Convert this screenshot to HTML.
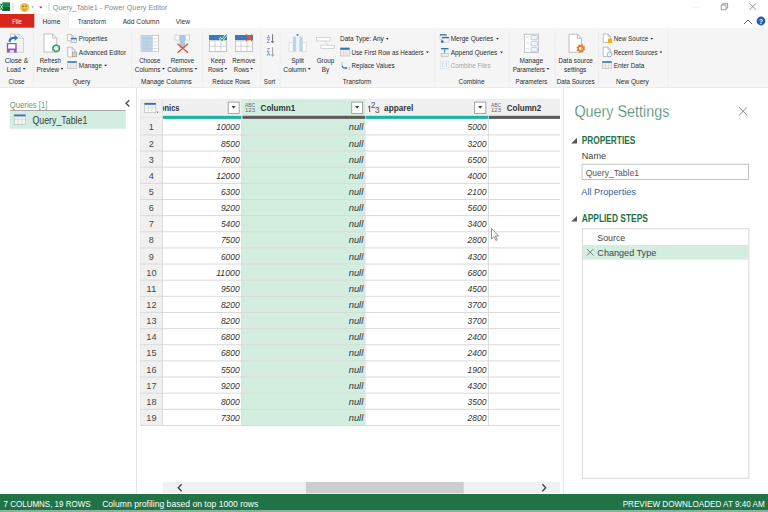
<!DOCTYPE html>
<html><head><meta charset="utf-8"><title>Power Query Editor</title>
<style>html,body{margin:0;padding:0;width:768px;height:512px;overflow:hidden;background:#fff;font-family:"Liberation Sans",sans-serif;} svg{display:block}</style>
</head><body><svg width="768" height="512" viewBox="0 0 768 512" font-family='"Liberation Sans", sans-serif'><rect x="0" y="0" width="768" height="14" fill="#ffffff" /><rect x="2.4" y="2.3" width="7.6" height="8.6" fill="#1e8a4a" /><rect x="2.4" y="7" width="7.6" height="3.9" fill="#11693a" /><rect x="0" y="3.8" width="3.6" height="5.8" fill="#157a40" /><path d="M0.3,4.6 L2.8,8.8 M2.8,4.6 L0.3,8.8" fill="none" stroke="#e8f4ec" stroke-width="0.9" /><line x1="13" y1="3" x2="13" y2="11" stroke="#c9d3dc" stroke-width="1" /><circle cx="24.6" cy="7.5" r="4.6" fill="#f4c542"/><path d="M21.8,5.4 L23.6,5.2 M25.6,5.2 L27.4,5.4" fill="none" stroke="#e07a3a" stroke-width="0.9" /><circle cx="23" cy="6.6" r="0.75" fill="#3a8a5a"/><circle cx="26" cy="6.6" r="0.75" fill="#3a8a5a"/><path d="M22.2,8.8 Q24.6,11.2 27,8.6" fill="none" stroke="#d7843a" stroke-width="0.8" /><circle cx="24" cy="9.9" r="0.8" fill="#e0703a"/><path d="M31.699999999999996,6.5 L33.9,6.5 L32.8,7.9 Z" fill="#6b8f7a"/><path d="M39.099999999999994,6.4 L42.5,6.4 L40.8,8.6 Z" fill="#555"/><line x1="49" y1="3" x2="49" y2="11" stroke="#c9d3dc" stroke-width="1" /><text x="52.75" y="9.9" font-size="7.5" fill="#8a8a8a" font-weight="400" text-anchor="start" font-style="normal" textLength="114.6" lengthAdjust="spacingAndGlyphs" >Query_Table1 - Power Query Editor</text><line x1="692" y1="7" x2="700" y2="7" stroke="#e6e6e6" stroke-width="0.8" /><rect x="721.2" y="5" width="4.8" height="4.8" fill="none" stroke="#888" stroke-width="0.8"/><path d="M722.8,5 V3.6 H727.6 V8.2 H726" fill="none" stroke="#888" stroke-width="0.8" /><path d="M749.5,3.3 L756,9.8 M756,3.3 L749.5,9.8" fill="none" stroke="#777" stroke-width="0.8" /><rect x="0" y="14" width="768" height="14" fill="#ffffff" /><rect x="0" y="14" width="34.7" height="13.7" fill="#d7261c" /><rect x="34.7" y="13.2" width="33.8" height="15" fill="#f5f5f5" /><line x1="34.7" y1="13.2" x2="34.7" y2="28" stroke="#e4e4e4" stroke-width="0.6" /><line x1="68.5" y1="13.2" x2="68.5" y2="28" stroke="#e4e4e4" stroke-width="0.6" /><text x="12.15" y="23.6" font-size="6.8" fill="#ffffff" font-weight="400" text-anchor="start" font-style="normal" textLength="9.8" lengthAdjust="spacingAndGlyphs" >File</text><text x="42.55" y="24.1" font-size="6.9" fill="#333" font-weight="400" text-anchor="start" font-style="normal" textLength="17.8" lengthAdjust="spacingAndGlyphs" >Home</text><text x="77.65" y="24.1" font-size="6.9" fill="#333" font-weight="400" text-anchor="start" font-style="normal" textLength="28.5" lengthAdjust="spacingAndGlyphs" >Transform</text><text x="122.65" y="24.1" font-size="6.9" fill="#333" font-weight="400" text-anchor="start" font-style="normal" textLength="36.7" lengthAdjust="spacingAndGlyphs" >Add Column</text><text x="175.65" y="24.1" font-size="6.9" fill="#333" font-weight="400" text-anchor="start" font-style="normal" textLength="14.3" lengthAdjust="spacingAndGlyphs" >View</text><path d="M744,24 L748,20 L752,24" fill="none" stroke="#555" stroke-width="0.9" /><circle cx="761" cy="21" r="4.4" fill="#1f5fb5"/><text x="761" y="23.6" font-size="6.4" fill="#ffffff" font-weight="700" text-anchor="middle" font-style="normal" >?</text><rect x="0" y="28" width="768" height="59.5" fill="#f5f5f5" /><line x1="0" y1="87.5" x2="768" y2="87.5" stroke="#ebebeb" stroke-width="1" /><line x1="33.5" y1="30" x2="33.5" y2="86" stroke="#d6d6d6" stroke-width="0.5" stroke-dasharray="1,1.2"/><line x1="131.7" y1="30" x2="131.7" y2="86" stroke="#d6d6d6" stroke-width="0.5" stroke-dasharray="1,1.2"/><line x1="202.5" y1="30" x2="202.5" y2="86" stroke="#d6d6d6" stroke-width="0.5" stroke-dasharray="1,1.2"/><line x1="260.6" y1="30" x2="260.6" y2="86" stroke="#d6d6d6" stroke-width="0.5" stroke-dasharray="1,1.2"/><line x1="280.2" y1="30" x2="280.2" y2="86" stroke="#d6d6d6" stroke-width="0.5" stroke-dasharray="1,1.2"/><line x1="435" y1="30" x2="435" y2="86" stroke="#d6d6d6" stroke-width="0.5" stroke-dasharray="1,1.2"/><line x1="509.3" y1="30" x2="509.3" y2="86" stroke="#d6d6d6" stroke-width="0.5" stroke-dasharray="1,1.2"/><line x1="555.1" y1="30" x2="555.1" y2="86" stroke="#d6d6d6" stroke-width="0.5" stroke-dasharray="1,1.2"/><line x1="598.5" y1="30" x2="598.5" y2="86" stroke="#d6d6d6" stroke-width="0.5" stroke-dasharray="1,1.2"/><line x1="668.2" y1="30" x2="668.2" y2="86" stroke="#d6d6d6" stroke-width="0.5" stroke-dasharray="1,1.2"/><path d="M10.4,34.2 H19.2 L23.4,38.400000000000006 V52.2 H10.4 Z" fill="#f8f8f8" stroke="#c4c4c4" stroke-width="0.8" /><path d="M19.2,34.2 V38.400000000000006 H23.4" fill="none" stroke="#c4c4c4" stroke-width="0.8" /><line x1="17.5" y1="41" x2="21.8" y2="41" stroke="#e2e2e2" stroke-width="0.6" /><line x1="17.5" y1="43.5" x2="21.8" y2="43.5" stroke="#e2e2e2" stroke-width="0.6" /><line x1="17.5" y1="46" x2="21.8" y2="46" stroke="#e2e2e2" stroke-width="0.6" /><line x1="17.5" y1="48.5" x2="21.8" y2="48.5" stroke="#e2e2e2" stroke-width="0.6" /><path d="M9.6,41.8 C9.6,38.6 11.6,37.6 15,37.8" fill="none" stroke="#2f73b8" stroke-width="2.3" /><path d="M14.6,34.8 L18.2,37.9 L14.6,41 Z" fill="#2f73b8" stroke="none" stroke-width="1" /><rect x="6.8" y="43" width="9.9" height="9.6" fill="#8e5bb5" /><rect x="8.2" y="44.2" width="7.1" height="4.3" fill="#ffffff" /><rect x="9.8" y="50.2" width="4.2" height="2.4" fill="#f0e8f6" /><text x="4.65" y="62.5" font-size="7.2" fill="#2b2b2b" font-weight="400" text-anchor="start" font-style="normal" textLength="23.5" lengthAdjust="spacingAndGlyphs" >Close &amp;</text><text x="6.75" y="71.6" font-size="7.2" fill="#2b2b2b" font-weight="400" text-anchor="start" font-style="normal" textLength="14.1" lengthAdjust="spacingAndGlyphs" >Load</text><path d="M22.8,68.0 L25.599999999999998,68.0 L24.2,69.80000000000001 Z" fill="#2b2b2b"/><text x="8.55" y="83.7" font-size="7.2" fill="#2b2b2b" font-weight="400" text-anchor="start" font-style="normal" textLength="16.0" lengthAdjust="spacingAndGlyphs" >Close</text><path d="M44,34 H52.55 L56.75,38.2 V52 H44 Z" fill="#ffffff" stroke="#b0b0b0" stroke-width="0.8" /><path d="M52.55,34 V38.2 H56.75" fill="none" stroke="#b0b0b0" stroke-width="0.8" /><circle cx="56" cy="48.5" r="4.3" fill="#f5f5f5"/><path d="M53.05,48.96 A3.2,3.2 0 0 1 58.65,46.34" fill="none" stroke="#35a070" stroke-width="1.6" /><path d="M59.35,47.84 A3.2,3.2 0 0 1 53.75,50.46" fill="none" stroke="#35a070" stroke-width="1.6" /><path d="M60.04,47.99 L60.03,45.18 L57.27,47.50 Z" fill="#35a070" stroke="none" stroke-width="1" /><path d="M52.36,48.81 L52.37,51.62 L55.13,49.30 Z" fill="#35a070" stroke="none" stroke-width="1" /><text x="39.75" y="62.5" font-size="7.2" fill="#2b2b2b" font-weight="400" text-anchor="start" font-style="normal" textLength="21.2" lengthAdjust="spacingAndGlyphs" >Refresh</text><text x="36.55" y="71.6" font-size="7.2" fill="#2b2b2b" font-weight="400" text-anchor="start" font-style="normal" textLength="22.6" lengthAdjust="spacingAndGlyphs" >Preview</text><path d="M60.6,68.0 L63.4,68.0 L62,69.80000000000001 Z" fill="#2b2b2b"/><text x="72.65" y="83.7" font-size="7.2" fill="#2b2b2b" font-weight="400" text-anchor="start" font-style="normal" textLength="17.7" lengthAdjust="spacingAndGlyphs" >Query</text><path d="M67.3,34.2 H71.3 L73.3,36.2 V40.800000000000004 H67.3 Z" fill="#f8f8f8" stroke="#b8b8b8" stroke-width="0.8" /><path d="M71.3,34.2 V36.2 H73.3" fill="none" stroke="#b8b8b8" stroke-width="0.8" /><rect x="71" y="38" width="5.6" height="4.5" fill="#e8e8e8" stroke="#a0a0a0" stroke-width="0.6"/><rect x="71" y="38" width="5.6" height="1.3" fill="#2f73b8" /><text x="78.85" y="41.2" font-size="7.2" fill="#2b2b2b" font-weight="400" text-anchor="start" font-style="normal" textLength="28.5" lengthAdjust="spacingAndGlyphs" >Properties</text><path d="M67.6,47.2 H72.1 L74.6,49.7 V56.800000000000004 H67.6 Z" fill="#f8f8f8" stroke="#b8b8b8" stroke-width="0.8" /><path d="M72.1,47.2 V49.7 H74.6" fill="none" stroke="#b8b8b8" stroke-width="0.8" /><rect x="72.2" y="52" width="4.6" height="4.8" fill="#cfcfcf" stroke="#888" stroke-width="0.5"/><text x="78.85" y="54.7" font-size="7.2" fill="#2b2b2b" font-weight="400" text-anchor="start" font-style="normal" textLength="47.2" lengthAdjust="spacingAndGlyphs" >Advanced Editor</text><rect x="67.6" y="61.3" width="9" height="7.4" fill="#eeeeee" stroke="#b8b8b8" stroke-width="0.6"/><rect x="67.6" y="61.3" width="9" height="1.5" fill="#2f73b8" /><line x1="70.6" y1="62.8" x2="70.6" y2="68.7" stroke="#c8c8c8" stroke-width="0.5" /><line x1="73.6" y1="62.8" x2="73.6" y2="68.7" stroke="#c8c8c8" stroke-width="0.5" /><text x="78.85" y="68.3" font-size="7.2" fill="#2b2b2b" font-weight="400" text-anchor="start" font-style="normal" textLength="23.1" lengthAdjust="spacingAndGlyphs" >Manage</text><path d="M104.19999999999999,64.69999999999999 L107.0,64.69999999999999 L105.6,66.5 Z" fill="#2b2b2b"/><rect x="141" y="35.3" width="17.7" height="16.3" fill="#ffffff" stroke="#b9b9b9" stroke-width="0.7"/><rect x="141.3" y="35.6" width="11.5" height="15.7" fill="#bcd3e8" /><line x1="152.8" y1="38.6" x2="158.5" y2="38.6" stroke="#c8c8c8" stroke-width="0.6" /><line x1="141.3" y1="38.6" x2="152.8" y2="38.6" stroke="#adc4da" stroke-width="0.4" /><line x1="152.8" y1="41.9" x2="158.5" y2="41.9" stroke="#c8c8c8" stroke-width="0.6" /><line x1="141.3" y1="41.9" x2="152.8" y2="41.9" stroke="#adc4da" stroke-width="0.4" /><line x1="152.8" y1="45.2" x2="158.5" y2="45.2" stroke="#c8c8c8" stroke-width="0.6" /><line x1="141.3" y1="45.2" x2="152.8" y2="45.2" stroke="#adc4da" stroke-width="0.4" /><line x1="152.8" y1="48.5" x2="158.5" y2="48.5" stroke="#c8c8c8" stroke-width="0.6" /><line x1="141.3" y1="48.5" x2="152.8" y2="48.5" stroke="#adc4da" stroke-width="0.4" /><line x1="147" y1="35.6" x2="147" y2="51.3" stroke="#adc4da" stroke-width="0.4" /><text x="139.15" y="62.5" font-size="7.2" fill="#2b2b2b" font-weight="400" text-anchor="start" font-style="normal" textLength="21.2" lengthAdjust="spacingAndGlyphs" >Choose</text><text x="134.75" y="71.6" font-size="7.2" fill="#2b2b2b" font-weight="400" text-anchor="start" font-style="normal" textLength="25.8" lengthAdjust="spacingAndGlyphs" >Columns</text><path d="M162.1,68.0 L164.9,68.0 L163.5,69.80000000000001 Z" fill="#2b2b2b"/><rect x="175" y="35" width="4.2" height="5" fill="#ffffff" stroke="#c0c0c0" stroke-width="0.6"/><rect x="185.5" y="35" width="4.2" height="5" fill="#ffffff" stroke="#c0c0c0" stroke-width="0.6"/><rect x="179.6" y="35" width="5.6" height="13" fill="#a9c7e4" /><path d="M177.5,43.8 L188,52.8 M188,43.8 L177.5,52.8" fill="none" stroke="#e0512b" stroke-width="1.3" /><text x="170.65" y="62.5" font-size="7.2" fill="#2b2b2b" font-weight="400" text-anchor="start" font-style="normal" textLength="23.5" lengthAdjust="spacingAndGlyphs" >Remove</text><text x="167.25" y="71.6" font-size="7.2" fill="#2b2b2b" font-weight="400" text-anchor="start" font-style="normal" textLength="25.8" lengthAdjust="spacingAndGlyphs" >Columns</text><path d="M194.5,68.0 L197.3,68.0 L195.9,69.80000000000001 Z" fill="#2b2b2b"/><text x="141.05" y="83.7" font-size="7.2" fill="#2b2b2b" font-weight="400" text-anchor="start" font-style="normal" textLength="50.7" lengthAdjust="spacingAndGlyphs" >Manage Columns</text><rect x="209.4" y="40.8" width="17.2" height="10.8" fill="#ffffff" stroke="#bdbdbd" stroke-width="0.9"/><rect x="209" y="35" width="18" height="5" fill="#3a78c0" /><line x1="209" y1="46.3" x2="227" y2="46.3" stroke="#c8c8c8" stroke-width="0.8" /><line x1="215" y1="40.8" x2="215" y2="51.6" stroke="#c8c8c8" stroke-width="0.8" /><line x1="221" y1="40.8" x2="221" y2="51.6" stroke="#c8c8c8" stroke-width="0.8" /><path d="M219.5,37.6 L222,40.4 L226.6,34.6" fill="none" stroke="#ffffff" stroke-width="2.4" /><path d="M219.5,37.6 L222,40.4 L226.6,34.6" fill="none" stroke="#3aa06a" stroke-width="1.3" /><text x="210.65" y="62.5" font-size="7.2" fill="#2b2b2b" font-weight="400" text-anchor="start" font-style="normal" textLength="14.5" lengthAdjust="spacingAndGlyphs" >Keep</text><text x="207.95" y="71.6" font-size="7.2" fill="#2b2b2b" font-weight="400" text-anchor="start" font-style="normal" textLength="15.3" lengthAdjust="spacingAndGlyphs" >Rows</text><path d="M224.5,68.0 L227.3,68.0 L225.9,69.80000000000001 Z" fill="#2b2b2b"/><rect x="235.4" y="40.8" width="17.2" height="10.8" fill="#ffffff" stroke="#bdbdbd" stroke-width="0.9"/><rect x="235" y="35" width="18" height="5" fill="#3a78c0" /><line x1="235" y1="46.3" x2="253" y2="46.3" stroke="#c8c8c8" stroke-width="0.8" /><line x1="241" y1="40.8" x2="241" y2="51.6" stroke="#c8c8c8" stroke-width="0.8" /><line x1="247" y1="40.8" x2="247" y2="51.6" stroke="#c8c8c8" stroke-width="0.8" /><path d="M246,34.5 L252.2,40.8 M252.2,34.5 L246,40.8" fill="none" stroke="#e8552a" stroke-width="1.3" /><text x="232.35" y="62.5" font-size="7.2" fill="#2b2b2b" font-weight="400" text-anchor="start" font-style="normal" textLength="23.0" lengthAdjust="spacingAndGlyphs" >Remove</text><text x="233.85" y="71.6" font-size="7.2" fill="#2b2b2b" font-weight="400" text-anchor="start" font-style="normal" textLength="15.1" lengthAdjust="spacingAndGlyphs" >Rows</text><path d="M250.29999999999998,68.0 L253.1,68.0 L251.7,69.80000000000001 Z" fill="#2b2b2b"/><text x="212.35" y="83.7" font-size="7.2" fill="#2b2b2b" font-weight="400" text-anchor="start" font-style="normal" textLength="37.7" lengthAdjust="spacingAndGlyphs" >Reduce Rows</text><text x="268.3" y="38.6" font-size="5" fill="#3b7dc4" font-weight="400" text-anchor="middle" font-style="normal" >A</text><text x="268.3" y="43" font-size="5" fill="#8e5bb5" font-weight="400" text-anchor="middle" font-style="normal" >Z</text><line x1="272.6" y1="34.2" x2="272.6" y2="42.6" stroke="#666" stroke-width="0.9" /><path d="M271.1,41 L272.6,43 L274.1,41" fill="none" stroke="#666" stroke-width="0.8" /><text x="268.3" y="51.6" font-size="5" fill="#8e5bb5" font-weight="400" text-anchor="middle" font-style="normal" >Z</text><text x="268.3" y="56.3" font-size="5" fill="#3b7dc4" font-weight="400" text-anchor="middle" font-style="normal" >A</text><line x1="272.6" y1="47.2" x2="272.6" y2="56" stroke="#999" stroke-width="0.9" /><path d="M271.1,54.4 L272.6,56.4 L274.1,54.4" fill="none" stroke="#999" stroke-width="0.8" /><text x="263.85" y="83.7" font-size="7.2" fill="#2b2b2b" font-weight="400" text-anchor="start" font-style="normal" textLength="11.5" lengthAdjust="spacingAndGlyphs" >Sort</text><path d="M289,51.6 V42.6 H293 V51.6 Z" fill="#ffffff" stroke="#d4d4d4" stroke-width="0.7" /><path d="M306.3,51.6 V42.6 H302.3 V51.6 Z" fill="#ffffff" stroke="#d4d4d4" stroke-width="0.7" /><rect x="293" y="36.6" width="3.2" height="15" fill="#bcd4ea" /><rect x="299.3" y="36.6" width="3.2" height="15" fill="#bcd4ea" /><path d="M296.0,34.3 L299.20000000000005,34.3 L297.6,36.3 Z" fill="#3a78c0"/><text x="291.15" y="62.5" font-size="7.2" fill="#2b2b2b" font-weight="400" text-anchor="start" font-style="normal" textLength="12.8" lengthAdjust="spacingAndGlyphs" >Split</text><text x="283.35" y="71.6" font-size="7.2" fill="#2b2b2b" font-weight="400" text-anchor="start" font-style="normal" textLength="22.9" lengthAdjust="spacingAndGlyphs" >Column</text><path d="M307.90000000000003,68.0 L310.7,68.0 L309.3,69.80000000000001 Z" fill="#2b2b2b"/><rect x="316.5" y="37.6" width="13.5" height="3.4" fill="#ffffff" stroke="#c6c6c6" stroke-width="0.7"/><rect x="321" y="45.2" width="13.3" height="3.4" fill="#ffffff" stroke="#c6c6c6" stroke-width="0.7"/><line x1="325" y1="41" x2="328" y2="45.2" stroke="#c6c6c6" stroke-width="0.6" /><text x="316.65" y="62.5" font-size="7.2" fill="#2b2b2b" font-weight="400" text-anchor="start" font-style="normal" textLength="17.6" lengthAdjust="spacingAndGlyphs" >Group</text><text x="321.65" y="71.6" font-size="7.2" fill="#2b2b2b" font-weight="400" text-anchor="start" font-style="normal" textLength="7.5" lengthAdjust="spacingAndGlyphs" >By</text><text x="340.05" y="41.2" font-size="7.2" fill="#2b2b2b" font-weight="400" text-anchor="start" font-style="normal" textLength="43.8" lengthAdjust="spacingAndGlyphs" >Data Type: Any</text><path d="M385.90000000000003,37.9 L388.7,37.9 L387.3,39.699999999999996 Z" fill="#2b2b2b"/><rect x="340.3" y="47.8" width="9.2" height="8.2" fill="#eeeeee" stroke="#b8b8b8" stroke-width="0.6"/><rect x="340.3" y="47.8" width="9.2" height="2" fill="#2f73b8" /><line x1="343.3" y1="49.8" x2="343.3" y2="56" stroke="#c8c8c8" stroke-width="0.5" /><line x1="346.3" y1="49.8" x2="346.3" y2="56" stroke="#c8c8c8" stroke-width="0.5" /><text x="351.55" y="54.7" font-size="7.2" fill="#2b2b2b" font-weight="400" text-anchor="start" font-style="normal" textLength="72.1" lengthAdjust="spacingAndGlyphs" >Use First Row as Headers</text><path d="M426.1,51.4 L428.9,51.4 L427.5,53.199999999999996 Z" fill="#2b2b2b"/><text x="342" y="65" font-size="3.6" fill="#777" font-weight="400" text-anchor="middle" font-style="normal" >1</text><path d="M342,65.6 Q342.5,68.5 346.5,68" fill="none" stroke="#2f73b8" stroke-width="1.1" /><path d="M345.6,66.6 L347.6,68 L345.6,69.4 Z" fill="#2f73b8" stroke="none" stroke-width="1" /><text x="349.2" y="70.4" font-size="3.8" fill="#777" font-weight="400" text-anchor="middle" font-style="normal" >2</text><text x="351.55" y="68.3" font-size="7.2" fill="#2b2b2b" font-weight="400" text-anchor="start" font-style="normal" textLength="43.0" lengthAdjust="spacingAndGlyphs" >Replace Values</text><text x="342.65" y="83.7" font-size="7.2" fill="#2b2b2b" font-weight="400" text-anchor="start" font-style="normal" textLength="28.7" lengthAdjust="spacingAndGlyphs" >Transform</text><rect x="440" y="34.2" width="6.5" height="5.5" fill="#f2f2f2" stroke="#b8b8b8" stroke-width="0.5"/><rect x="440" y="34.2" width="6.5" height="1.3" fill="#2f73b8" /><rect x="442" y="37" width="7" height="5.2" fill="#f2f2f2" stroke="#b8b8b8" stroke-width="0.5"/><rect x="442" y="37" width="7" height="1.3" fill="#2f73b8" /><circle cx="442.2" cy="41.6" r="1.4" fill="#2f73b8"/><text x="450.65" y="41.2" font-size="7.2" fill="#2b2b2b" font-weight="400" text-anchor="start" font-style="normal" textLength="42.7" lengthAdjust="spacingAndGlyphs" >Merge Queries</text><path d="M496.1,37.9 L498.9,37.9 L497.5,39.699999999999996 Z" fill="#2b2b2b"/><rect x="441" y="48" width="7.5" height="1.4" fill="#2f73b8" /><line x1="444.7" y1="49.4" x2="444.7" y2="53.5" stroke="#2f73b8" stroke-width="0.9" /><rect x="441" y="53.5" width="7.5" height="3.1" fill="#e8e8e8" stroke="#b0b0b0" stroke-width="0.5"/><text x="450.65" y="54.7" font-size="7.2" fill="#2b2b2b" font-weight="400" text-anchor="start" font-style="normal" textLength="46.7" lengthAdjust="spacingAndGlyphs" >Append Queries</text><path d="M500.1,51.4 L502.9,51.4 L501.5,53.199999999999996 Z" fill="#2b2b2b"/><rect x="440.3" y="61.3" width="8.6" height="7.4" fill="#f4f8fb" stroke="#d0d8e0" stroke-width="0.5"/><line x1="442.8" y1="62.5" x2="442.8" y2="67" stroke="#9dbbd8" stroke-width="0.7" /><line x1="446.3" y1="62.5" x2="446.3" y2="67" stroke="#9dbbd8" stroke-width="0.7" /><text x="450.65" y="68.3" font-size="7.2" fill="#a8a8a8" font-weight="400" text-anchor="start" font-style="normal" textLength="40.1" lengthAdjust="spacingAndGlyphs" >Combine Files</text><text x="458.45" y="83.7" font-size="7.2" fill="#2b2b2b" font-weight="400" text-anchor="start" font-style="normal" textLength="26.1" lengthAdjust="spacingAndGlyphs" >Combine</text><rect x="524.5" y="34.2" width="14" height="18.2" fill="#ffffff" stroke="#b0b0b0" stroke-width="0.7"/><rect x="531" y="35.4" width="6.4" height="4.4" fill="#eef4fa" stroke="#8fb4dc" stroke-width="0.6" rx="0.8"/><line x1="526" y1="36.9" x2="529.5" y2="36.9" stroke="#c0c0c0" stroke-width="0.5" /><rect x="531" y="41.4" width="6.4" height="4.4" fill="#eef4fa" stroke="#8fb4dc" stroke-width="0.6" rx="0.8"/><line x1="526" y1="42.9" x2="529.5" y2="42.9" stroke="#c0c0c0" stroke-width="0.5" /><rect x="531" y="47.4" width="6.4" height="4.4" fill="#eef4fa" stroke="#8fb4dc" stroke-width="0.6" rx="0.8"/><line x1="526" y1="48.9" x2="529.5" y2="48.9" stroke="#c0c0c0" stroke-width="0.5" /><text x="519.55" y="62.5" font-size="7.2" fill="#2b2b2b" font-weight="400" text-anchor="start" font-style="normal" textLength="23.5" lengthAdjust="spacingAndGlyphs" >Manage</text><text x="512.65" y="71.6" font-size="7.2" fill="#2b2b2b" font-weight="400" text-anchor="start" font-style="normal" textLength="32.3" lengthAdjust="spacingAndGlyphs" >Parameters</text><path d="M546.6,68.0 L549.4,68.0 L548,69.80000000000001 Z" fill="#2b2b2b"/><text x="515.55" y="83.7" font-size="7.2" fill="#2b2b2b" font-weight="400" text-anchor="start" font-style="normal" textLength="31.8" lengthAdjust="spacingAndGlyphs" >Parameters</text><path d="M569,34.2 H577.5 L581.5,38.2 V52.2 H569 Z" fill="#ffffff" stroke="#b0b0b0" stroke-width="0.8" /><path d="M577.5,34.2 V38.2 H581.5" fill="none" stroke="#b0b0b0" stroke-width="0.8" /><circle cx="580.8" cy="48.5" r="3.2" fill="none" stroke="#e8822a" stroke-width="2.4" stroke-dasharray="1.4,1.1"/><circle cx="580.8" cy="48.5" r="2.6" fill="none" stroke="#e8822a" stroke-width="1.6"/><text x="558.45" y="62.5" font-size="7.2" fill="#2b2b2b" font-weight="400" text-anchor="start" font-style="normal" textLength="34.5" lengthAdjust="spacingAndGlyphs" >Data source</text><text x="564.05" y="71.6" font-size="7.2" fill="#2b2b2b" font-weight="400" text-anchor="start" font-style="normal" textLength="22.3" lengthAdjust="spacingAndGlyphs" >settings</text><text x="556.65" y="83.7" font-size="7.2" fill="#2b2b2b" font-weight="400" text-anchor="start" font-style="normal" textLength="38.1" lengthAdjust="spacingAndGlyphs" >Data Sources</text><path d="M603.2,34 H608.0 L610.2,36.2 V42.5 H603.2 Z" fill="#ffffff" stroke="#b0b0b0" stroke-width="0.8" /><path d="M608.0,34 V36.2 H610.2" fill="none" stroke="#b0b0b0" stroke-width="0.8" /><rect x="608" y="38.5" width="4" height="4.5" fill="#f0b400" /><text x="613.65" y="41.2" font-size="7.2" fill="#2b2b2b" font-weight="400" text-anchor="start" font-style="normal" textLength="34.6" lengthAdjust="spacingAndGlyphs" >New Source</text><path d="M650.4,37.9 L653.1999999999999,37.9 L651.8,39.699999999999996 Z" fill="#2b2b2b"/><path d="M603.2,47.2 H608.0 L610.2,49.400000000000006 V56.6 H603.2 Z" fill="#ffffff" stroke="#b0b0b0" stroke-width="0.8" /><path d="M608.0,47.2 V49.400000000000006 H610.2" fill="none" stroke="#b0b0b0" stroke-width="0.8" /><circle cx="609.6" cy="54.4" r="2.4" fill="#ffffff" stroke="#5d9ad6" stroke-width="0.7"/><text x="613.65" y="54.7" font-size="7.2" fill="#2b2b2b" font-weight="400" text-anchor="start" font-style="normal" textLength="43.9" lengthAdjust="spacingAndGlyphs" >Recent Sources</text><path d="M659.5,51.4 L662.3,51.4 L660.9,53.199999999999996 Z" fill="#2b2b2b"/><rect x="602.4" y="61.3" width="9.3" height="7.4" fill="#eeeeee" stroke="#b8b8b8" stroke-width="0.6"/><rect x="602.4" y="61.3" width="9.3" height="1.5" fill="#2f73b8" /><line x1="605.5" y1="62.8" x2="605.5" y2="68.7" stroke="#c8c8c8" stroke-width="0.5" /><line x1="608.6" y1="62.8" x2="608.6" y2="68.7" stroke="#c8c8c8" stroke-width="0.5" /><text x="613.65" y="68.3" font-size="7.2" fill="#2b2b2b" font-weight="400" text-anchor="start" font-style="normal" textLength="30.6" lengthAdjust="spacingAndGlyphs" >Enter Data</text><text x="616.05" y="83.7" font-size="7.2" fill="#2b2b2b" font-weight="400" text-anchor="start" font-style="normal" textLength="32.7" lengthAdjust="spacingAndGlyphs" >New Query</text><rect x="0" y="88" width="768" height="406" fill="#ffffff" /><line x1="136.5" y1="88" x2="136.5" y2="494" stroke="#e3e3e3" stroke-width="1" /><line x1="563.5" y1="88" x2="563.5" y2="494" stroke="#e3e3e3" stroke-width="1" /><text x="9.65" y="108" font-size="9.0" fill="#62a084" font-weight="400" text-anchor="start" font-style="normal" textLength="37.7" lengthAdjust="spacingAndGlyphs" >Queries [1]</text><rect x="10" y="110.6" width="115.8" height="18.2" fill="#d3ede0" /><line x1="10" y1="110.5" x2="125.8" y2="110.5" stroke="#a6a6a6" stroke-width="1" /><rect x="14.2" y="114.6" width="11.3" height="9.7" fill="#f4f4f4" stroke="#b9b9b9" stroke-width="0.6"/><rect x="14.2" y="114.6" width="11.3" height="1.8" fill="#2f73b8" /><line x1="14.2" y1="119.5" x2="25.5" y2="119.5" stroke="#cccccc" stroke-width="0.5" /><line x1="18" y1="116.4" x2="18" y2="124.3" stroke="#cccccc" stroke-width="0.5" /><line x1="21.7" y1="116.4" x2="21.7" y2="124.3" stroke="#cccccc" stroke-width="0.5" /><text x="32.45" y="124.2" font-size="10.2" fill="#3a3a3a" font-weight="400" text-anchor="start" font-style="normal" textLength="54.9" lengthAdjust="spacingAndGlyphs" >Query_Table1</text><path d="M129.4,100.2 L126,103.3 L129.4,106.4" fill="none" stroke="#444" stroke-width="1.3" /><rect x="140" y="99.3" width="420" height="16.5" fill="#f0f0f0" /><rect x="140" y="115.8" width="22.5" height="3.2" fill="#f0f0f0" /><line x1="140" y1="117.3" x2="162.5" y2="117.3" stroke="#e2e2e2" stroke-width="0.8" /><rect x="241.5" y="99.3" width="123.5" height="16.5" fill="#d3eedf" /><rect x="162.5" y="115.8" width="79" height="3.1" fill="#1ab3a2" /><rect x="242.5" y="115.8" width="122.5" height="3.1" fill="#5c5c5c" /><rect x="365.5" y="115.8" width="123" height="3.1" fill="#1ab3a2" /><rect x="489" y="115.8" width="71" height="3.1" fill="#5c5c5c" /><line x1="140" y1="99.3" x2="560" y2="99.3" stroke="#e2e2e2" stroke-width="0.6" /><rect x="140" y="119" width="22.5" height="306.66" fill="#f0f0f0" /><rect x="241.5" y="119" width="123.5" height="306.66" fill="#d3eedf" /><line x1="162.5" y1="119" x2="162.5" y2="425.66" stroke="#dedede" stroke-width="1" /><line x1="241.5" y1="119" x2="241.5" y2="425.66" stroke="#dedede" stroke-width="1" /><line x1="365" y1="119" x2="365" y2="425.66" stroke="#dedede" stroke-width="1" /><line x1="488.5" y1="119" x2="488.5" y2="425.66" stroke="#dedede" stroke-width="1" /><line x1="162.5" y1="99.3" x2="162.5" y2="119" stroke="#e0e0e0" stroke-width="0.8" /><line x1="140" y1="134.94" x2="560" y2="134.94" stroke="#dadada" stroke-width="1" /><line x1="140" y1="151.08" x2="560" y2="151.08" stroke="#dadada" stroke-width="1" /><line x1="140" y1="167.22000000000003" x2="560" y2="167.22000000000003" stroke="#dadada" stroke-width="1" /><line x1="140" y1="183.36" x2="560" y2="183.36" stroke="#dadada" stroke-width="1" /><line x1="140" y1="199.5" x2="560" y2="199.5" stroke="#dadada" stroke-width="1" /><line x1="140" y1="215.64000000000001" x2="560" y2="215.64000000000001" stroke="#dadada" stroke-width="1" /><line x1="140" y1="231.78000000000003" x2="560" y2="231.78000000000003" stroke="#dadada" stroke-width="1" /><line x1="140" y1="247.92000000000002" x2="560" y2="247.92000000000002" stroke="#dadada" stroke-width="1" /><line x1="140" y1="264.06" x2="560" y2="264.06" stroke="#dadada" stroke-width="1" /><line x1="140" y1="280.2" x2="560" y2="280.2" stroke="#dadada" stroke-width="1" /><line x1="140" y1="296.34000000000003" x2="560" y2="296.34000000000003" stroke="#dadada" stroke-width="1" /><line x1="140" y1="312.48" x2="560" y2="312.48" stroke="#dadada" stroke-width="1" /><line x1="140" y1="328.62" x2="560" y2="328.62" stroke="#dadada" stroke-width="1" /><line x1="140" y1="344.76000000000005" x2="560" y2="344.76000000000005" stroke="#dadada" stroke-width="1" /><line x1="140" y1="360.90000000000003" x2="560" y2="360.90000000000003" stroke="#dadada" stroke-width="1" /><line x1="140" y1="377.04" x2="560" y2="377.04" stroke="#dadada" stroke-width="1" /><line x1="140" y1="393.18" x2="560" y2="393.18" stroke="#dadada" stroke-width="1" /><line x1="140" y1="409.32" x2="560" y2="409.32" stroke="#dadada" stroke-width="1" /><line x1="140" y1="425.46000000000004" x2="560" y2="425.46000000000004" stroke="#dadada" stroke-width="1" /><rect x="144.5" y="103" width="11.3" height="9.6" fill="#f7f7f7" stroke="#b5b5b5" stroke-width="0.6"/><rect x="144.5" y="103" width="11.3" height="1.8" fill="#2f73b8" /><line x1="144.5" y1="107.8" x2="155.8" y2="107.8" stroke="#cfcfcf" stroke-width="0.5" /><line x1="148.3" y1="104.8" x2="148.3" y2="112.6" stroke="#cfcfcf" stroke-width="0.5" /><line x1="152" y1="104.8" x2="152" y2="112.6" stroke="#cfcfcf" stroke-width="0.5" /><path d="M156.5,111.7 L158.7,111.7 L157.6,113.10000000000001 Z" fill="#555"/><clipPath id="c1"><rect x="163" y="99" width="78" height="17"/></clipPath><text x="179.5" y="110.8" font-size="8.8" fill="#333" font-weight="700" text-anchor="end" font-style="normal" textLength="39.5" lengthAdjust="spacingAndGlyphs" clip-path="url(#c1)">electronics</text><rect x="228.20000000000002" y="102.1" width="10.899999999999988" height="11.3" fill="#ffffff" stroke="#9a9a9a" stroke-width="0.9"/><path d="M231.55,106.10000000000001 L235.75,106.10000000000001 L233.65,108.7 Z" fill="#444"/><rect x="351.7" y="102.1" width="10.899999999999988" height="11.3" fill="#ffffff" stroke="#9a9a9a" stroke-width="0.9"/><path d="M355.04999999999995,106.10000000000001 L359.25,106.10000000000001 L357.15,108.7 Z" fill="#444"/><rect x="474.59999999999997" y="102.1" width="11.2" height="11.3" fill="#ffffff" stroke="#9a9a9a" stroke-width="0.9"/><path d="M478.09999999999997,106.10000000000001 L482.3,106.10000000000001 L480.2,108.7 Z" fill="#444"/><text x="245" y="106.7" font-size="4.6" fill="#666" font-weight="400" text-anchor="start" font-style="normal" textLength="10" lengthAdjust="spacingAndGlyphs" >ABC</text><text x="245" y="111.8" font-size="4.6" fill="#666" font-weight="400" text-anchor="start" font-style="normal" textLength="10" lengthAdjust="spacingAndGlyphs" >123</text><text x="491" y="106.7" font-size="4.6" fill="#666" font-weight="400" text-anchor="start" font-style="normal" textLength="10" lengthAdjust="spacingAndGlyphs" >ABC</text><text x="491" y="111.8" font-size="4.6" fill="#666" font-weight="400" text-anchor="start" font-style="normal" textLength="10" lengthAdjust="spacingAndGlyphs" >123</text><text x="260.55" y="110.9" font-size="8.8" fill="#333" font-weight="700" text-anchor="start" font-style="normal" textLength="34.6" lengthAdjust="spacingAndGlyphs" >Column1</text><text x="384.05" y="110.9" font-size="8.8" fill="#333" font-weight="700" text-anchor="start" font-style="normal" textLength="29.3" lengthAdjust="spacingAndGlyphs" >apparel</text><text x="506.65" y="110.9" font-size="8.8" fill="#333" font-weight="700" text-anchor="start" font-style="normal" textLength="34.7" lengthAdjust="spacingAndGlyphs" >Column2</text><path d="M368,107.3 L369.7,106 V111.9" fill="none" stroke="#505050" stroke-width="1" /><text x="373.3" y="108.2" font-size="8.2" fill="#505050" font-weight="400" text-anchor="middle" font-style="normal" textLength="4.4" lengthAdjust="spacingAndGlyphs" >2</text><text x="377.2" y="112.6" font-size="8.8" fill="#505050" font-weight="400" text-anchor="middle" font-style="normal" textLength="4.6" lengthAdjust="spacingAndGlyphs" >3</text><text x="151.4" y="130.4" font-size="9.9" fill="#484848" font-weight="400" text-anchor="middle" font-style="normal" textLength="5.1" lengthAdjust="spacingAndGlyphs" >1</text><text x="239.8" y="130.4" font-size="9.2" fill="#333" font-weight="400" text-anchor="end" font-style="italic" textLength="23.63" lengthAdjust="spacingAndGlyphs" >10000</text><text x="363.3" y="130.4" font-size="9.2" fill="#333" font-weight="400" text-anchor="end" font-style="italic" textLength="14.6" lengthAdjust="spacingAndGlyphs" >null</text><text x="486.5" y="130.4" font-size="9.2" fill="#333" font-weight="400" text-anchor="end" font-style="italic" textLength="18.9" lengthAdjust="spacingAndGlyphs" >5000</text><text x="151.4" y="146.54" font-size="9.9" fill="#484848" font-weight="400" text-anchor="middle" font-style="normal" textLength="5.1" lengthAdjust="spacingAndGlyphs" >2</text><text x="239.8" y="146.54" font-size="9.2" fill="#333" font-weight="400" text-anchor="end" font-style="italic" textLength="18.9" lengthAdjust="spacingAndGlyphs" >8500</text><text x="363.3" y="146.54" font-size="9.2" fill="#333" font-weight="400" text-anchor="end" font-style="italic" textLength="14.6" lengthAdjust="spacingAndGlyphs" >null</text><text x="486.5" y="146.54" font-size="9.2" fill="#333" font-weight="400" text-anchor="end" font-style="italic" textLength="18.9" lengthAdjust="spacingAndGlyphs" >3200</text><text x="151.4" y="162.68" font-size="9.9" fill="#484848" font-weight="400" text-anchor="middle" font-style="normal" textLength="5.1" lengthAdjust="spacingAndGlyphs" >3</text><text x="239.8" y="162.68" font-size="9.2" fill="#333" font-weight="400" text-anchor="end" font-style="italic" textLength="18.9" lengthAdjust="spacingAndGlyphs" >7800</text><text x="363.3" y="162.68" font-size="9.2" fill="#333" font-weight="400" text-anchor="end" font-style="italic" textLength="14.6" lengthAdjust="spacingAndGlyphs" >null</text><text x="486.5" y="162.68" font-size="9.2" fill="#333" font-weight="400" text-anchor="end" font-style="italic" textLength="18.9" lengthAdjust="spacingAndGlyphs" >6500</text><text x="151.4" y="178.82000000000002" font-size="9.9" fill="#484848" font-weight="400" text-anchor="middle" font-style="normal" textLength="5.1" lengthAdjust="spacingAndGlyphs" >4</text><text x="239.8" y="178.82000000000002" font-size="9.2" fill="#333" font-weight="400" text-anchor="end" font-style="italic" textLength="23.63" lengthAdjust="spacingAndGlyphs" >12000</text><text x="363.3" y="178.82000000000002" font-size="9.2" fill="#333" font-weight="400" text-anchor="end" font-style="italic" textLength="14.6" lengthAdjust="spacingAndGlyphs" >null</text><text x="486.5" y="178.82000000000002" font-size="9.2" fill="#333" font-weight="400" text-anchor="end" font-style="italic" textLength="18.9" lengthAdjust="spacingAndGlyphs" >4000</text><text x="151.4" y="194.96" font-size="9.9" fill="#484848" font-weight="400" text-anchor="middle" font-style="normal" textLength="5.1" lengthAdjust="spacingAndGlyphs" >5</text><text x="239.8" y="194.96" font-size="9.2" fill="#333" font-weight="400" text-anchor="end" font-style="italic" textLength="18.9" lengthAdjust="spacingAndGlyphs" >6300</text><text x="363.3" y="194.96" font-size="9.2" fill="#333" font-weight="400" text-anchor="end" font-style="italic" textLength="14.6" lengthAdjust="spacingAndGlyphs" >null</text><text x="486.5" y="194.96" font-size="9.2" fill="#333" font-weight="400" text-anchor="end" font-style="italic" textLength="18.9" lengthAdjust="spacingAndGlyphs" >2100</text><text x="151.4" y="211.1" font-size="9.9" fill="#484848" font-weight="400" text-anchor="middle" font-style="normal" textLength="5.1" lengthAdjust="spacingAndGlyphs" >6</text><text x="239.8" y="211.1" font-size="9.2" fill="#333" font-weight="400" text-anchor="end" font-style="italic" textLength="18.9" lengthAdjust="spacingAndGlyphs" >9200</text><text x="363.3" y="211.1" font-size="9.2" fill="#333" font-weight="400" text-anchor="end" font-style="italic" textLength="14.6" lengthAdjust="spacingAndGlyphs" >null</text><text x="486.5" y="211.1" font-size="9.2" fill="#333" font-weight="400" text-anchor="end" font-style="italic" textLength="18.9" lengthAdjust="spacingAndGlyphs" >5600</text><text x="151.4" y="227.24" font-size="9.9" fill="#484848" font-weight="400" text-anchor="middle" font-style="normal" textLength="5.1" lengthAdjust="spacingAndGlyphs" >7</text><text x="239.8" y="227.24" font-size="9.2" fill="#333" font-weight="400" text-anchor="end" font-style="italic" textLength="18.9" lengthAdjust="spacingAndGlyphs" >5400</text><text x="363.3" y="227.24" font-size="9.2" fill="#333" font-weight="400" text-anchor="end" font-style="italic" textLength="14.6" lengthAdjust="spacingAndGlyphs" >null</text><text x="486.5" y="227.24" font-size="9.2" fill="#333" font-weight="400" text-anchor="end" font-style="italic" textLength="18.9" lengthAdjust="spacingAndGlyphs" >3400</text><text x="151.4" y="243.38000000000002" font-size="9.9" fill="#484848" font-weight="400" text-anchor="middle" font-style="normal" textLength="5.1" lengthAdjust="spacingAndGlyphs" >8</text><text x="239.8" y="243.38000000000002" font-size="9.2" fill="#333" font-weight="400" text-anchor="end" font-style="italic" textLength="18.9" lengthAdjust="spacingAndGlyphs" >7500</text><text x="363.3" y="243.38000000000002" font-size="9.2" fill="#333" font-weight="400" text-anchor="end" font-style="italic" textLength="14.6" lengthAdjust="spacingAndGlyphs" >null</text><text x="486.5" y="243.38000000000002" font-size="9.2" fill="#333" font-weight="400" text-anchor="end" font-style="italic" textLength="18.9" lengthAdjust="spacingAndGlyphs" >2800</text><text x="151.4" y="259.52" font-size="9.9" fill="#484848" font-weight="400" text-anchor="middle" font-style="normal" textLength="5.1" lengthAdjust="spacingAndGlyphs" >9</text><text x="239.8" y="259.52" font-size="9.2" fill="#333" font-weight="400" text-anchor="end" font-style="italic" textLength="18.9" lengthAdjust="spacingAndGlyphs" >6000</text><text x="363.3" y="259.52" font-size="9.2" fill="#333" font-weight="400" text-anchor="end" font-style="italic" textLength="14.6" lengthAdjust="spacingAndGlyphs" >null</text><text x="486.5" y="259.52" font-size="9.2" fill="#333" font-weight="400" text-anchor="end" font-style="italic" textLength="18.9" lengthAdjust="spacingAndGlyphs" >4300</text><text x="151.4" y="275.65999999999997" font-size="9.9" fill="#484848" font-weight="400" text-anchor="middle" font-style="normal" textLength="10.2" lengthAdjust="spacingAndGlyphs" >10</text><text x="239.8" y="275.65999999999997" font-size="9.2" fill="#333" font-weight="400" text-anchor="end" font-style="italic" textLength="23.63" lengthAdjust="spacingAndGlyphs" >11000</text><text x="363.3" y="275.65999999999997" font-size="9.2" fill="#333" font-weight="400" text-anchor="end" font-style="italic" textLength="14.6" lengthAdjust="spacingAndGlyphs" >null</text><text x="486.5" y="275.65999999999997" font-size="9.2" fill="#333" font-weight="400" text-anchor="end" font-style="italic" textLength="18.9" lengthAdjust="spacingAndGlyphs" >6800</text><text x="151.4" y="291.79999999999995" font-size="9.9" fill="#484848" font-weight="400" text-anchor="middle" font-style="normal" textLength="10.2" lengthAdjust="spacingAndGlyphs" >11</text><text x="239.8" y="291.79999999999995" font-size="9.2" fill="#333" font-weight="400" text-anchor="end" font-style="italic" textLength="18.9" lengthAdjust="spacingAndGlyphs" >9500</text><text x="363.3" y="291.79999999999995" font-size="9.2" fill="#333" font-weight="400" text-anchor="end" font-style="italic" textLength="14.6" lengthAdjust="spacingAndGlyphs" >null</text><text x="486.5" y="291.79999999999995" font-size="9.2" fill="#333" font-weight="400" text-anchor="end" font-style="italic" textLength="18.9" lengthAdjust="spacingAndGlyphs" >4500</text><text x="151.4" y="307.94" font-size="9.9" fill="#484848" font-weight="400" text-anchor="middle" font-style="normal" textLength="10.2" lengthAdjust="spacingAndGlyphs" >12</text><text x="239.8" y="307.94" font-size="9.2" fill="#333" font-weight="400" text-anchor="end" font-style="italic" textLength="18.9" lengthAdjust="spacingAndGlyphs" >8200</text><text x="363.3" y="307.94" font-size="9.2" fill="#333" font-weight="400" text-anchor="end" font-style="italic" textLength="14.6" lengthAdjust="spacingAndGlyphs" >null</text><text x="486.5" y="307.94" font-size="9.2" fill="#333" font-weight="400" text-anchor="end" font-style="italic" textLength="18.9" lengthAdjust="spacingAndGlyphs" >3700</text><text x="151.4" y="324.08" font-size="9.9" fill="#484848" font-weight="400" text-anchor="middle" font-style="normal" textLength="10.2" lengthAdjust="spacingAndGlyphs" >13</text><text x="239.8" y="324.08" font-size="9.2" fill="#333" font-weight="400" text-anchor="end" font-style="italic" textLength="18.9" lengthAdjust="spacingAndGlyphs" >8200</text><text x="363.3" y="324.08" font-size="9.2" fill="#333" font-weight="400" text-anchor="end" font-style="italic" textLength="14.6" lengthAdjust="spacingAndGlyphs" >null</text><text x="486.5" y="324.08" font-size="9.2" fill="#333" font-weight="400" text-anchor="end" font-style="italic" textLength="18.9" lengthAdjust="spacingAndGlyphs" >3700</text><text x="151.4" y="340.21999999999997" font-size="9.9" fill="#484848" font-weight="400" text-anchor="middle" font-style="normal" textLength="10.2" lengthAdjust="spacingAndGlyphs" >14</text><text x="239.8" y="340.21999999999997" font-size="9.2" fill="#333" font-weight="400" text-anchor="end" font-style="italic" textLength="18.9" lengthAdjust="spacingAndGlyphs" >6800</text><text x="363.3" y="340.21999999999997" font-size="9.2" fill="#333" font-weight="400" text-anchor="end" font-style="italic" textLength="14.6" lengthAdjust="spacingAndGlyphs" >null</text><text x="486.5" y="340.21999999999997" font-size="9.2" fill="#333" font-weight="400" text-anchor="end" font-style="italic" textLength="18.9" lengthAdjust="spacingAndGlyphs" >2400</text><text x="151.4" y="356.36" font-size="9.9" fill="#484848" font-weight="400" text-anchor="middle" font-style="normal" textLength="10.2" lengthAdjust="spacingAndGlyphs" >15</text><text x="239.8" y="356.36" font-size="9.2" fill="#333" font-weight="400" text-anchor="end" font-style="italic" textLength="18.9" lengthAdjust="spacingAndGlyphs" >6800</text><text x="363.3" y="356.36" font-size="9.2" fill="#333" font-weight="400" text-anchor="end" font-style="italic" textLength="14.6" lengthAdjust="spacingAndGlyphs" >null</text><text x="486.5" y="356.36" font-size="9.2" fill="#333" font-weight="400" text-anchor="end" font-style="italic" textLength="18.9" lengthAdjust="spacingAndGlyphs" >2400</text><text x="151.4" y="372.5" font-size="9.9" fill="#484848" font-weight="400" text-anchor="middle" font-style="normal" textLength="10.2" lengthAdjust="spacingAndGlyphs" >16</text><text x="239.8" y="372.5" font-size="9.2" fill="#333" font-weight="400" text-anchor="end" font-style="italic" textLength="18.9" lengthAdjust="spacingAndGlyphs" >5500</text><text x="363.3" y="372.5" font-size="9.2" fill="#333" font-weight="400" text-anchor="end" font-style="italic" textLength="14.6" lengthAdjust="spacingAndGlyphs" >null</text><text x="486.5" y="372.5" font-size="9.2" fill="#333" font-weight="400" text-anchor="end" font-style="italic" textLength="18.9" lengthAdjust="spacingAndGlyphs" >1900</text><text x="151.4" y="388.64" font-size="9.9" fill="#484848" font-weight="400" text-anchor="middle" font-style="normal" textLength="10.2" lengthAdjust="spacingAndGlyphs" >17</text><text x="239.8" y="388.64" font-size="9.2" fill="#333" font-weight="400" text-anchor="end" font-style="italic" textLength="18.9" lengthAdjust="spacingAndGlyphs" >9200</text><text x="363.3" y="388.64" font-size="9.2" fill="#333" font-weight="400" text-anchor="end" font-style="italic" textLength="14.6" lengthAdjust="spacingAndGlyphs" >null</text><text x="486.5" y="388.64" font-size="9.2" fill="#333" font-weight="400" text-anchor="end" font-style="italic" textLength="18.9" lengthAdjust="spacingAndGlyphs" >4300</text><text x="151.4" y="404.78" font-size="9.9" fill="#484848" font-weight="400" text-anchor="middle" font-style="normal" textLength="10.2" lengthAdjust="spacingAndGlyphs" >18</text><text x="239.8" y="404.78" font-size="9.2" fill="#333" font-weight="400" text-anchor="end" font-style="italic" textLength="18.9" lengthAdjust="spacingAndGlyphs" >8000</text><text x="363.3" y="404.78" font-size="9.2" fill="#333" font-weight="400" text-anchor="end" font-style="italic" textLength="14.6" lengthAdjust="spacingAndGlyphs" >null</text><text x="486.5" y="404.78" font-size="9.2" fill="#333" font-weight="400" text-anchor="end" font-style="italic" textLength="18.9" lengthAdjust="spacingAndGlyphs" >3500</text><text x="151.4" y="420.91999999999996" font-size="9.9" fill="#484848" font-weight="400" text-anchor="middle" font-style="normal" textLength="10.2" lengthAdjust="spacingAndGlyphs" >19</text><text x="239.8" y="420.91999999999996" font-size="9.2" fill="#333" font-weight="400" text-anchor="end" font-style="italic" textLength="18.9" lengthAdjust="spacingAndGlyphs" >7300</text><text x="363.3" y="420.91999999999996" font-size="9.2" fill="#333" font-weight="400" text-anchor="end" font-style="italic" textLength="14.6" lengthAdjust="spacingAndGlyphs" >null</text><text x="486.5" y="420.91999999999996" font-size="9.2" fill="#333" font-weight="400" text-anchor="end" font-style="italic" textLength="18.9" lengthAdjust="spacingAndGlyphs" >2800</text><rect x="162.8" y="482" width="397.2" height="11.4" fill="#f0f0f0" /><rect x="306" y="482" width="157.7" height="11.4" fill="#cdcdcd" /><path d="M181.6,484.2 L178.3,487.7 L181.6,491.2" fill="none" stroke="#444" stroke-width="1.4" /><path d="M542.4,484.2 L545.7,487.7 L542.4,491.2" fill="none" stroke="#444" stroke-width="1.4" /><path d="M491.5,228.5 L491.5,239 L494,236.6 L495.8,240.4 L497.2,239.8 L495.4,236 L498.6,236 Z" fill="#ffffff" stroke="#444" stroke-width="0.6" /><text x="574.45" y="116.9" font-size="15.6" fill="#2c7556" font-weight="400" text-anchor="start" font-style="normal" textLength="94.9" lengthAdjust="spacingAndGlyphs" stroke="#ffffff" stroke-width="0.35">Query Settings</text><path d="M739.2,107.4 L747,115.2 M747,107.4 L739.2,115.2" fill="none" stroke="#777" stroke-width="0.9" /><path d="M571.2,143.4 L577,143.4 L577,137.8 Z" fill="#555" stroke="none" stroke-width="1" /><text x="581.65" y="143.6" font-size="10" fill="#217346" font-weight="700" text-anchor="start" font-style="normal" textLength="53.7" lengthAdjust="spacingAndGlyphs" >PROPERTIES</text><text x="581.75" y="159" font-size="9.5" fill="#444" font-weight="400" text-anchor="start" font-style="normal" textLength="24.4" lengthAdjust="spacingAndGlyphs" >Name</text><rect x="582" y="164.2" width="166.5" height="15.2" fill="#ffffff" stroke="#b4b4b4" stroke-width="0.8"/><text x="585.65" y="175.8" font-size="9.5" fill="#555" font-weight="400" text-anchor="start" font-style="normal" textLength="53.3" lengthAdjust="spacingAndGlyphs" >Query_Table1</text><text x="581.25" y="195.3" font-size="9.5" fill="#2f5fa0" font-weight="400" text-anchor="start" font-style="normal" textLength="54.7" lengthAdjust="spacingAndGlyphs" >All Properties</text><path d="M571.2,221.6 L577,221.6 L577,216 Z" fill="#555" stroke="none" stroke-width="1" /><text x="581.65" y="221.8" font-size="10" fill="#217346" font-weight="700" text-anchor="start" font-style="normal" textLength="66.2" lengthAdjust="spacingAndGlyphs" >APPLIED STEPS</text><rect x="582.3" y="228.8" width="166.6" height="249.4" fill="#ffffff" stroke="#cdcdcd" stroke-width="0.8"/><rect x="582.7" y="245" width="165.8" height="14.7" fill="#d3ede0" /><text x="597.35" y="241" font-size="9.5" fill="#444" font-weight="400" text-anchor="start" font-style="normal" textLength="27.9" lengthAdjust="spacingAndGlyphs" >Source</text><path d="M587,249 L593.5,255.5 M593.5,249 L587,255.5" fill="none" stroke="#666" stroke-width="0.8" /><text x="597.35" y="256" font-size="9.5" fill="#444" font-weight="400" text-anchor="start" font-style="normal" textLength="58.9" lengthAdjust="spacingAndGlyphs" >Changed Type</text><rect x="0" y="494" width="768" height="16.5" fill="#217346" /><rect x="0" y="510.5" width="768" height="1.5" fill="#7fb597" /><text x="3.55" y="506.7" font-size="8.8" fill="#ffffff" font-weight="400" text-anchor="start" font-style="normal" textLength="87.0" lengthAdjust="spacingAndGlyphs" >7 COLUMNS, 19 ROWS</text><text x="102.15" y="506.7" font-size="8.8" fill="#ffffff" font-weight="400" text-anchor="start" font-style="normal" textLength="156.2" lengthAdjust="spacingAndGlyphs" >Column profiling based on top 1000 rows</text><text x="622.65" y="506.7" font-size="8.8" fill="#ffffff" font-weight="400" text-anchor="start" font-style="normal" textLength="142.1" lengthAdjust="spacingAndGlyphs" >PREVIEW DOWNLOADED AT 9:40 AM</text></svg></body></html>
